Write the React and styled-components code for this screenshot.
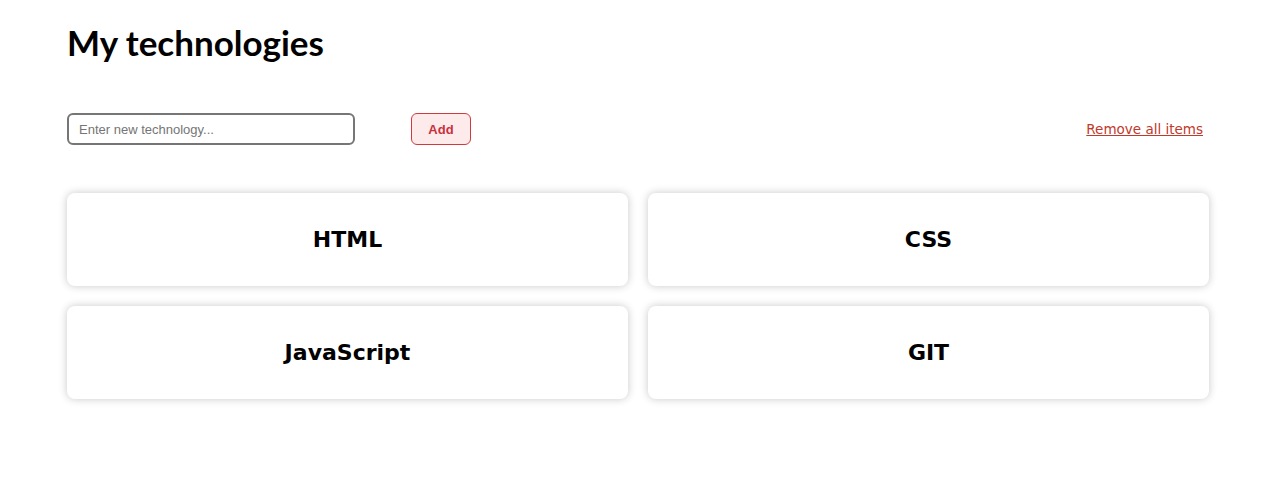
import React, { useState } from 'react';
import styled, { createGlobalStyle } from 'styled-components';

const GlobalStyle = createGlobalStyle`
    body {
        margin: 0;
        background: #fff;
        font-family: "Liberation Sans", Arial, sans-serif;
    }
`;

const Page = styled.main`
    padding: 18px 74px 40px 67px;
`;

const Title = styled.h1`
    margin: 0 0 47px;
    font-family: Lato, "Noto Sans", sans-serif;
    font-weight: 700;
    font-size: 35px;
    line-height: 48px;
    color: #000;
`;

const Toolbar = styled.div`
    display: flex;
    align-items: center;
    justify-content: space-between;
    margin-bottom: 48px;
`;

const Controls = styled.div`
    display: flex;
    align-items: center;
    gap: 56px;
`;

const Input = styled.input`
    box-sizing: border-box;
    width: 288px;
    height: 32px;
    padding: 0 10px;
    border: 2px solid #767676;
    border-radius: 6px;
    font-family: "Liberation Sans", Arial, sans-serif;
    font-size: 13px;
    outline: none;
    &::placeholder {
        color: #757575;
    }
`;

const AddButton = styled.button`
    box-sizing: border-box;
    width: 60px;
    height: 32px;
    border: 1px solid #d2393f;
    border-radius: 6px;
    background: #fdeaea;
    color: #c8323e;
    font-family: "Liberation Sans", Arial, sans-serif;
    font-weight: 700;
    font-size: 13px;
    cursor: pointer;
`;

const RemoveLink = styled.a`
    margin-right: 6px;
    font-family: "DejaVu Sans", sans-serif;
    font-size: 13.5px;
    color: #c0392b;
    text-decoration: underline;
    cursor: pointer;
`;

const Grid = styled.div`
    display: grid;
    grid-template-columns: 1fr 1fr;
    gap: 20px;
`;

const Card = styled.div`
    height: 93px;
    display: flex;
    align-items: center;
    justify-content: center;
    background: #fff;
    border-radius: 8px;
    box-shadow: 0 0 8px rgba(0, 0, 0, 0.22);
    font-family: "DejaVu Sans", sans-serif;
    font-weight: 700;
    font-size: 22px;
    color: #000;
`;

const initial = ['HTML', 'CSS', 'JavaScript', 'GIT'];

export default function App() {
    const [items, setItems] = useState(initial);
    const [text, setText] = useState('');

    const add = () => {
        if (!text.trim()) return;
        setItems([...items, text.trim()]);
        setText('');
    };

    return (
        <>
            <GlobalStyle />
            <Page>
                <Title>My technologies</Title>
                <Toolbar>
                    <Controls>
                        <Input
                            placeholder="Enter new technology..."
                            value={text}
                            onChange={e => setText(e.target.value)}
                        />
                        <AddButton onClick={add}>Add</AddButton>
                    </Controls>
                    <RemoveLink onClick={() => setItems([])}>Remove all items</RemoveLink>
                </Toolbar>
                <Grid>
                    {items.map(item => (
                        <Card key={item}>{item}</Card>
                    ))}
                </Grid>
            </Page>
        </>
    );
}
